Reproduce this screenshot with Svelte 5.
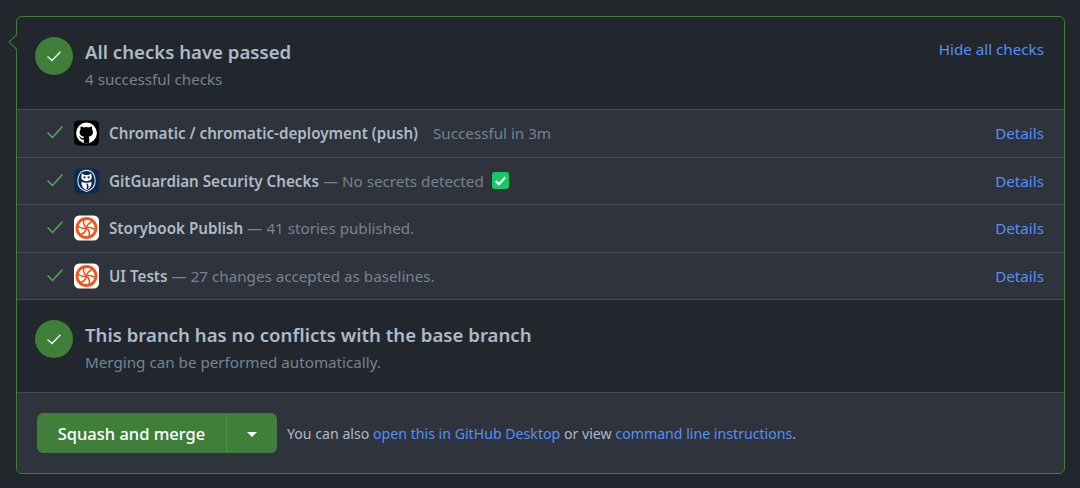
<script>
  const petals = [0, 60, 120, 180, 240, 300];
  const rows = [
    { app: "github", name: "Chromatic / chromatic-deployment (push)", note: "Successful in 3m", spaced: true },
    { app: "guardian", name: "GitGuardian Security Checks", note: "— No secrets detected", tick: true },
    { app: "chromatic", name: "Storybook Publish", note: "— 41 stories published." },
    { app: "chromatic", name: "UI Tests", note: "— 27 changes accepted as baselines." }
  ];
</script>

<div class="page">
  <div class="box">
    <span class="caret"></span>

    <section class="head first">
      <div class="badge">
        <svg viewBox="0 0 16 16" width="16" height="16"><path d="M1.500 8.500 6 12.500l8.500-8.800" /></svg>
      </div>
      <div class="titles">
        <h3>All checks have passed</h3>
        <p>4 successful checks</p>
      </div>
      <a class="hide">Hide all checks</a>
    </section>

    <div class="rows">
      {#each rows as row}
        <div class="row">
          <svg class="ok" viewBox="0 0 16 16" width="16" height="16"><path d="M.5 7.500 5.500 12.500 15.500 1.500" /></svg>
          <span class="app">
            {#if row.app === "github"}
              <svg viewBox="0 0 24 24" width="25" height="26">
                <rect width="24" height="24" rx="4" fill="#000" />
                <circle cx="12" cy="12" r="10" fill="#fff" />
                <path d="M9.400 22v-3.700c-2.400.5-3.200-1-3.500-1.800-.2-.4-.6-.9-1-1.100-.3-.2-.2-.4 0-.4.800 0 1.400.7 1.600 1.100.8 1.300 2 1 2.600.7.100-.6.300-1 .6-1.200-2.200-.3-4.300-1.100-4.300-4.700 0-1 .4-1.900 1-2.600-.1-.3-.4-1.200.100-2.600 0 0 .9-.3 2.800 1a9.400 9.400 0 0 1 5 0c1.900-1.300 2.800-1 2.800-1 .5 1.400.2 2.300.1 2.600.6.700 1 1.600 1 2.600 0 3.600-2.100 4.400-4.300 4.700.4.300.7.900.7 1.800V22Z" fill="#000" />
              </svg>
            {:else if row.app === "guardian"}
              <svg viewBox="0 0 24 24" width="25" height="26">
                <rect width="24" height="24" rx="5" fill="#0e2950" />
                <path d="M12 1.800c2.200 0 4 .6 5.300 1.600 2 2.200 3 5.400 3 8.600 0 4.800-3.200 8.500-8.300 10.200C6.900 20.500 3.700 16.800 3.700 12c0-3.200 1-6.400 3-8.600C8 2.400 9.800 1.800 12 1.800Z" fill="none" stroke="#dfe6f0" stroke-width="1" />
                <path d="M7.500 4.500 10 6.300h4l2.500-1.800.5 4c0 2.300-2.200 3.700-5 3.700s-5-1.400-5-3.700Z" fill="#fff" />
                <circle cx="10" cy="8.500" r="1.100" fill="#0e2950" />
                <circle cx="14" cy="8.500" r="1.100" fill="#0e2950" />
                <path d="M7.300 12.800c2.400 1.200 7 1.200 9.400 0 .6 3.400-1.200 6.400-4.700 8-3.500-1.600-5.300-4.600-4.700-8Z" fill="#fff" />
                <path d="M12.800 14.300c1.700 1.800 1.700 4 .2 5.700l-1.300-.7c1-1.600 1-3.300-.2-4.700Z" fill="#0e2950" />
              </svg>
            {:else}
              <svg viewBox="0 0 24 24" width="25" height="26">
                <rect width="24" height="24" rx="5" fill="#fff" />
                <circle cx="12" cy="12" r="10.500" fill="#f2541f" />
                <circle cx="12" cy="12" r="7.800" fill="#fff" />
                {#each petals as angle}
                  <path class="blade" d="M12 12C12.500 9 14.500 6.500 18.500 5.500" transform="rotate({angle} 12 12)" />
                {/each}
              </svg>
            {/if}
          </span>
          <strong>{row.name}</strong>
          <span class="note" class:spaced={row.spaced}>{row.note}</span>
          {#if row.tick}
            <svg class="tick" viewBox="0 0 16 16" width="17" height="17">
              <rect width="16" height="16" rx="2.500" fill="#16c964" />
              <path d="m3.500 8.500 3 3 6-6.500" />
            </svg>
          {/if}
          <a class="details">Details</a>
        </div>
      {/each}
    </div>

    <section class="head conflicts">
      <div class="badge">
        <svg viewBox="0 0 16 16" width="16" height="16"><path d="M1.500 8.500 6 12.500l8.500-8.800" /></svg>
      </div>
      <div class="titles">
        <h3>This branch has no conflicts with the base branch</h3>
        <p>Merging can be performed automatically.</p>
      </div>
    </section>

    <footer>
      <div class="merge">
        <button class="main">Squash and merge</button>
        <button class="drop" aria-label="Select merge method"><span class="arrow"></span></button>
      </div>
      <p>You can also <a>open this in GitHub Desktop</a> or view <a>command line instructions</a>.</p>
    </footer>
  </div>
</div>

<style>
  :global(body) {
    background: #22272e;
  }

  .page {
    padding: 16px 15px 14px 16px;
    font-family: "Noto Sans", "Open Sans", sans-serif;
    color: #adbac7;
  }

  .box {
    position: relative;
    border: 1px solid #3f7f3a;
    border-radius: 6px;
  }

  .caret {
    position: absolute;
    left: -6px;
    top: 19px;
    width: 12px;
    height: 12px;
    background: #22272e;
    border-left: 1px solid #3f7f3a;
    border-bottom: 1px solid #3f7f3a;
    transform: rotate(45deg);
    box-sizing: border-box;
  }

  .head {
    display: flex;
    gap: 12px;
    height: 93px;
    padding: 20px 20px 0 18px;
    box-sizing: border-box;
    border-bottom: 1px solid #444c56;
  }

  .badge {
    flex: none;
    display: flex;
    align-items: center;
    justify-content: center;
    width: 38px;
    height: 38px;
    border-radius: 50%;
    background: #3f7f3a;
  }

  .badge path {
    fill: none;
    stroke: #e6edf3;
    stroke-width: 1.500;
  }

  .titles {
    flex: 1;
  }

  h3 {
    margin: 0;
    font-size: 18.600px;
    line-height: 30px;
    font-weight: 600;
  }

  .titles p {
    margin: 0;
    font-size: 15.200px;
    line-height: 24px;
    color: #768390;
  }

  .hide {
    font-size: 15.200px;
    line-height: 25px;
    color: #5490f5;
  }

  .rows {
    background: #2e333c;
    border-bottom: 1px solid #444c56;
  }

  .row {
    display: flex;
    align-items: center;
    height: 47.500px;
    padding: 0 20px 0 30px;
    box-sizing: border-box;
    border-top: 1px solid #444c56;
    font-size: 15.200px;
  }

  .row:first-child {
    height: 46.500px;
    border-top: 0;
  }

  .ok {
    margin-right: 11px;
  }

  .ok path {
    fill: none;
    stroke: #57ab5a;
    stroke-width: 1.500;
  }

  .app {
    display: flex;
    margin-right: 10px;
  }

  .blade {
    fill: none;
    stroke: #f2541f;
    stroke-width: 1.500;
  }

  strong {
    font-weight: 600;
    white-space: nowrap;
  }

  .note {
    margin-left: 4px;
    color: #768390;
  }

  .note.spaced {
    margin-left: 15px;
  }

  .tick {
    margin-left: 8px;
  }

  .tick path {
    fill: none;
    stroke: #fff;
    stroke-width: 2;
  }

  .details {
    margin-left: auto;
    color: #5490f5;
  }

  footer {
    display: flex;
    align-items: center;
    gap: 10px;
    height: 80px;
    padding: 0 20px;
    background: #2e333c;
    border-radius: 0 0 6px 6px;
    font-size: 14.150px;
  }

  footer p {
    margin: 0;
  }

  footer a {
    color: #5490f5;
  }

  .merge {
    display: flex;
    height: 40px;
  }

  .merge button {
    border: 1px solid #3f7f3a;
    background: #3f7f3a;
    color: #fff;
    font-family: inherit;
    font-size: 16.500px;
    font-weight: 500;
  }

  .main {
    width: 189px;
    border-radius: 6px 0 0 6px;
  }

  .drop {
    width: 51px;
    display: flex;
    align-items: center;
    justify-content: center;
    border-radius: 0 6px 6px 0;
    border-left-color: #4b8f4f !important;
  }

  .arrow {
    width: 0;
    height: 0;
    margin-top: 3px;
    border: 5px solid transparent;
    border-bottom: 0;
    border-top-color: #fff;
  }
</style>
